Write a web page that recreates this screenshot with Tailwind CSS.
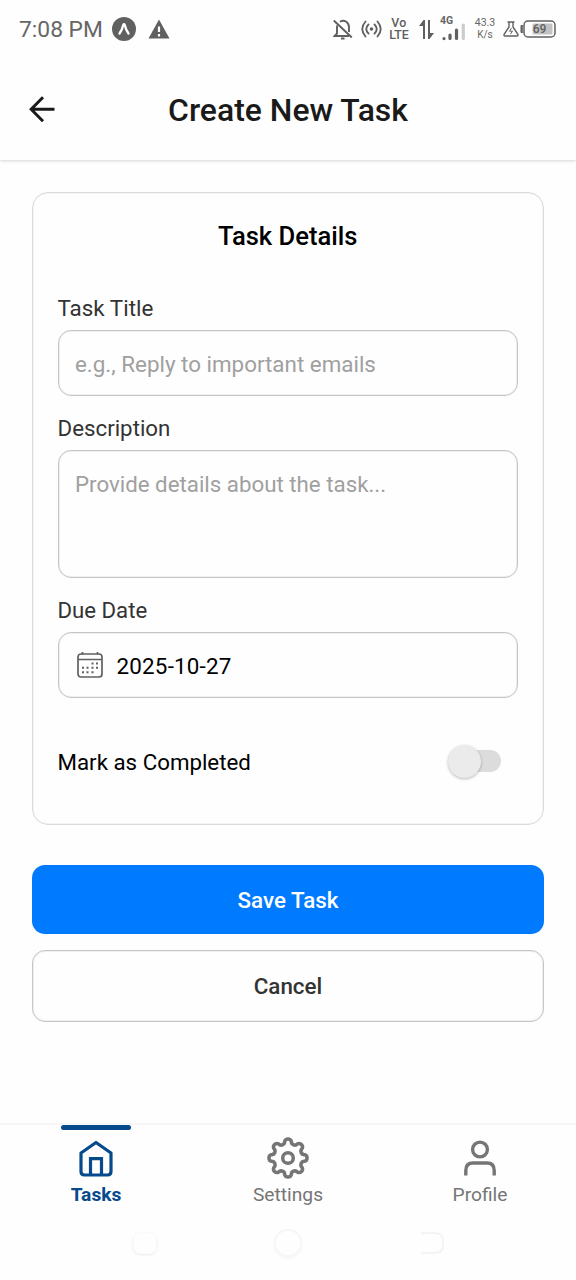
<!DOCTYPE html>
<html lang="en">
<head>
<meta charset="utf-8">
<title>Create New Task</title>
<script src="https://cdn.jsdelivr.net/npm/@tailwindcss/browser@4"></script>
</head>
<body class="w-[576px] h-[1280px] overflow-hidden bg-[#fefefe] font-['Roboto',sans-serif] flex flex-col whitespace-nowrap">
<div class="h-[60px] shrink-0 flex items-center pl-[19px] text-[#666] bg-[#fefefe] z-10">
  <span class="w-[93px] text-[22.800px] leading-[60px]">7:08 PM</span>
  <svg class="w-6 h-6 -mt-[2px]" viewBox="0 0 24 24"><circle cx="12" cy="12" r="12" fill="#606060"/><path d="M7.500 16.500Q10.500 12 11.200 8Q12 6.400 12.800 8Q13.500 12 16.500 16.500" fill="none" stroke="#fff" stroke-width="2.300" stroke-linecap="round"/></svg>
  <svg class="w-[22px] h-[20px] ml-[12px] -mt-[2px]" viewBox="0 0 22 20"><path d="M11 .500L21.500 19.500H.500Z" fill="#606060"/><path d="M11 7.500V13M11 15V17.500" stroke="#fff" stroke-width="2.200"/></svg>
  <svg class="w-[20px] h-[21px] ml-[163px] -mt-[2px]" viewBox="0 0 20 21" fill="none" stroke="#606060" stroke-width="1.900"><path d="M.800 1.500L18.800 18.500M4 6.500V14.500L1.500 17H16M7 2.800Q10 .900 13 2.500Q16 4.500 16 8V13M8 19.500H11.500"/></svg>
  <svg class="w-[21px] h-[18px] ml-[8px] -mt-[2px]" viewBox="0 0 21 18" fill="none" stroke="#606060" stroke-width="1.800" stroke-linecap="round"><circle cx="10.500" cy="9" r="1.800" fill="#606060" stroke="none"/><path d="M4.500 1.500Q-2 9 4.500 16.500M7.500 4.500Q3 9 7.500 13.500M13.500 4.500Q18 9 13.500 13.500M16.500 1.500Q23 9 16.500 16.500"/></svg>
  <div class="w-[22px] ml-[6px] flex flex-col items-center text-[12.400px] leading-[12px] font-medium text-[#606060] -mt-[2px]"><div class="tracking-[0.5px]">Vo</div><div>LTE</div></div>
  <svg class="w-[16px] h-[19px] ml-[9px] -mt-[1px]" viewBox="0 0 16 19" fill="#606060"><path d="M0 6L4.500 0H6V19H4V6ZM15 13L10.500 19H9V0H11V13Z"/></svg>
  <div class="w-[26px] ml-[5px] h-[25px] -mt-[3px] flex flex-col"><div class="h-[10px] text-[10.500px] leading-[10px] font-bold">4G</div>
    <svg class="w-[26px] h-[14px] overflow-visible" viewBox="0 0 26 14" stroke-width="3.200" stroke="#606060" stroke-linecap="round"><path d="M4 12.500V12.600M10 9V12.500M16.500 4V12.500"/><path d="M23.300 -1V12.500" stroke="#ccc"/></svg>
  </div>
  <div class="w-[22px] ml-[8px] text-center text-[10.500px] leading-[12px] -mt-[2px]"><div>43.3</div><div class="text-[10px]">K/s</div></div>
  <svg class="w-[16px] h-[16px] ml-[7px] -mt-[2px]" viewBox="0 0 16 16" fill="none" stroke="#606060" stroke-width="1.400"><path d="M4.500 1H11.500M6 1V6L1 13.500Q.800 15 2 15H14Q15.200 15 15 13.500L10 6V1"/><path d="M8.500 7L6.500 10.200H9.500L7.500 13" stroke-width="1"/></svg>
  <svg class="w-[36px] h-[18px] ml-[1px] -mt-[2px]" viewBox="0 0 36 18"><path d="M2.800 5.500H1V12.500H2.800" fill="#606060" stroke="#606060" stroke-width="1"/><rect x="4" y="1" width="31" height="16" rx="4" fill="none" stroke="#606060" stroke-width="1.500"/><rect x="12.500" y="3.500" width="20" height="11" rx="1.500" fill="#c2c2c2"/><text x="19.500" y="13.300" text-anchor="middle" font-size="12" font-weight="500" fill="#606060">69</text></svg>
</div>
<header class="h-[100px] shrink-0 grid grid-cols-[136px_1fr_136px] items-center bg-[#fefefe] shadow-[0_1px_3px_rgba(0,0,0,0.16)]">
  <svg class="w-[26px] h-[26px] ml-[29px] -mt-[3px]" viewBox="0 0 26 26" fill="none" stroke="#1a1a1a" stroke-width="3"><path d="M25.500 13.200H2.500M14 1.200L2.200 13.200L14 25.200"/></svg>
  <h1 class="text-center text-[31.900px] leading-[100px] font-medium text-[#1a1a1a]">Create New Task</h1>
</header>
<main class="flex flex-col px-8 pt-8">
  <section class="h-[633px] rounded-[16px] border border-[#dadada] shadow-[inset_0_0_0_1px_#f5f5f5] pl-[24.500px] pr-[25px] flex flex-col">
    <h2 class="mt-[27px] text-center text-[25.600px] leading-[32px] font-medium text-black">Task Details</h2>
    <div class="mt-[42px] h-[28px] text-[22.400px] leading-[28px] text-[#333]">Task Title</div>
    <div class="mt-[8px] h-[66px] rounded-[13px] border border-[#c6c6c6] shadow-[inset_0_0_0_1px_#efefef] px-[16.500px] text-[22.400px] leading-[67px] text-[#a0a0a0]">e.g., Reply to important emails</div>
    <div class="mt-[18px] h-[28px] text-[22.300px] leading-[28px] text-[#333]">Description</div>
    <div class="mt-[8px] h-[128px] rounded-[13px] border border-[#c6c6c6] shadow-[inset_0_0_0_1px_#efefef] px-[16.500px] text-[22.300px] leading-[67px] text-[#a0a0a0]">Provide details about the task...</div>
    <div class="mt-[18px] h-[28px] text-[22.200px] leading-[28px] text-[#333]">Due Date</div>
    <div class="mt-[8px] h-[66px] rounded-[13px] border border-[#c6c6c6] shadow-[inset_0_0_0_1px_#efefef] pl-[18px] pt-[2px] flex items-center gap-[14px]">
      <svg class="w-[26px] h-[26px] -mt-[2px]" viewBox="0 0 26 26" fill="none" stroke="#606060" stroke-width="1.700"><rect x="1" y="2" width="24" height="23" rx="3"/><path d="M1 7.500H25M5.500 0V2.500M20.500 0V2.500"/><path d="M14.500 11.500H16.500M19 11.500H21M5 15.700H7M9.500 15.700H11.500M14.500 15.700H16.500M19 15.700H21M5 20.200H7M9.500 20.200H11.500M14.500 20.200H16.500" stroke-width="2"/></svg>
      <span class="text-[22.400px] leading-[60px] tracking-[0.2px] text-black">2025-10-27</span>
    </div>
    <div class="mt-[46px] h-[36px] flex items-center justify-between">
      <span class="text-[22.300px] leading-[36px] text-black">Mark as Completed</span>
      <div class="w-[54px] h-[34px] mr-[16px] flex items-center">
        <div class="w-[33px] h-[33px] -mt-[2px] shrink-0 rounded-full bg-[#ebebeb] shadow-[0_1px_3px_rgba(0,0,0,0.28)] z-10"></div>
        <div class="w-[38px] h-[22px] -mt-[2px] -ml-[18px] shrink-0 rounded-full bg-[#dcdcdc]"></div>
      </div>
    </div>
  </section>
  <button class="mt-[40px] h-[69px] pt-[2px] rounded-[13px] bg-[#007bff] text-white text-[22.400px] font-medium">Save Task</button>
  <button class="mt-[16px] h-[72px] pt-[2px] rounded-[13px] border border-[#c6c6c6] shadow-[inset_0_0_0_1px_#efefef] text-[#333] text-[22.400px] font-medium">Cancel</button>
</main>
<nav class="mt-auto h-[157px] shrink-0 border-t-2 border-[#f7f7f7] flex flex-col">
  <div class="grid grid-cols-3 h-[86px] text-[19.200px] leading-[24px] text-[#757575]">
    <div class="flex flex-col items-center text-[#064a8c]">
      <div class="w-[70px] h-[5px] rounded-full bg-[#064a8c]"></div>
      <svg class="w-[34px] h-[37px] mt-[10px]" viewBox="0 0 34 37" fill="none" stroke="currentColor" stroke-width="3.200" stroke-linejoin="round"><path d="M2 13L17 2.500L32 13V31.500Q32 35 28.500 35H5.500Q2 35 2 31.500Z"/><path d="M11.500 34V18.700H22.500V34" stroke-linejoin="miter"/></svg>
      <span class="mt-[6px] font-bold">Tasks</span>
    </div>
    <div class="flex flex-col items-center">
      <svg class="w-[42px] h-[42px] mt-[12px]" viewBox="-21 -21 42 42" fill="none" stroke="currentColor" stroke-width="3.500"><path d="M16.673 -3.317A3.500 3.500 0 0 1 16.673 3.317A3.500 3.500 0 0 0 14.135 9.445A3.500 3.500 0 0 1 9.445 14.135A3.500 3.500 0 0 0 3.317 16.673A3.500 3.500 0 0 1 -3.317 16.673A3.500 3.500 0 0 0 -9.445 14.135A3.500 3.500 0 0 1 -14.135 9.445A3.500 3.500 0 0 0 -16.673 3.317A3.500 3.500 0 0 1 -16.673 -3.317A3.500 3.500 0 0 0 -14.135 -9.445A3.500 3.500 0 0 1 -9.445 -14.135A3.500 3.500 0 0 0 -3.317 -16.673A3.500 3.500 0 0 1 3.317 -16.673A3.500 3.500 0 0 0 9.445 -14.135A3.500 3.500 0 0 1 14.135 -9.445A3.500 3.500 0 0 0 16.673 -3.317Z"/><circle r="5.300"/></svg>
      <span class="mt-[4px]">Settings</span>
    </div>
    <div class="flex flex-col items-center">
      <svg class="w-[34px] h-[37px] mt-[14px]" viewBox="0 0 34 37" fill="none" stroke="currentColor" stroke-width="3.400"><circle cx="17" cy="10.500" r="7.400"/><path d="M2.800 36.500V31.500Q2.800 24 10 24H24Q31.200 24 31.200 31.500V36.500"/></svg>
      <span class="mt-[7px]">Profile</span>
    </div>
  </div>
  <div class="mt-[17px] h-[30px] grid grid-cols-[24px_28px_26px] justify-center gap-x-[117px] items-center pl-px">
    <div class="h-[22px] rounded-[8px] border border-[#fafafa] shadow-[0_1px_3px_rgba(0,0,0,0.08)]"></div>
    <div class="h-[28px] rounded-full border-2 border-[#f7f7f7] shadow-[0_1px_3px_rgba(0,0,0,0.06)]"></div>
    <svg class="w-[26px] h-[24px]" viewBox="0 0 26 24" fill="none" stroke="#f4f4f4" stroke-width="2"><path d="M2 2H16Q24 2 24 10V14Q24 22 16 22H2"/></svg>
  </div>
</nav>
</body>
</html>
